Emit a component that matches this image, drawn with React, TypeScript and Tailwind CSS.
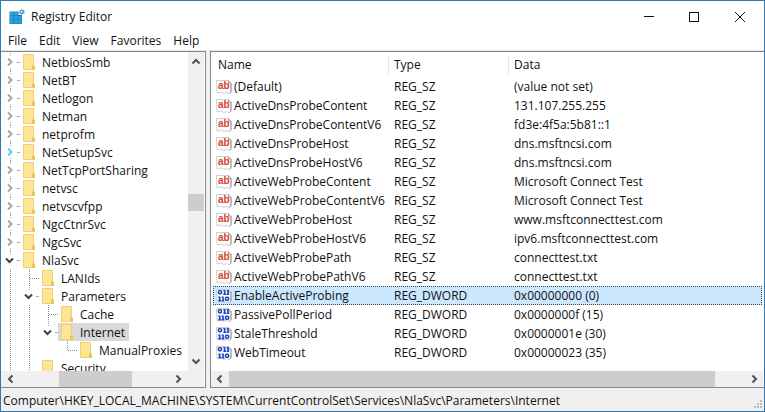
import type { ReactNode } from "react";

type Guide = "none" | "line" | "tee" | "elbow";

interface TreeItem {
  name: string;
  guides: Guide[];
  state?: "closed" | "open";
  active?: boolean;
  selected?: boolean;
}

const services = [
  "NetbiosSmb",
  "NetBT",
  "Netlogon",
  "Netman",
  "netprofm",
  "NetSetupSvc",
  "NetTcpPortSharing",
  "netvsc",
  "netvscvfpp",
  "NgcCtnrSvc",
  "NgcSvc",
];

const tree: TreeItem[] = [
  ...services.map((name): TreeItem => ({
    name,
    guides: [],
    state: "closed",
    active: name === "NetSetupSvc",
  })),
  { name: "NlaSvc", guides: [], state: "open" },
  { name: "LANIds", guides: ["line", "tee"] },
  { name: "Parameters", guides: ["line"], state: "open" },
  { name: "Cache", guides: ["line", "line", "tee"] },
  { name: "Internet", guides: ["line", "line"], state: "open", selected: true },
  { name: "ManualProxies", guides: ["line", "line", "none", "elbow"] },
  { name: "Security", guides: ["line", "line"] },
];

interface RegistryValue {
  name: string;
  type: "REG_SZ" | "REG_DWORD";
  data: string;
  selected?: boolean;
}

const values: RegistryValue[] = [
  { name: "(Default)", type: "REG_SZ", data: "(value not set)" },
  { name: "ActiveDnsProbeContent", type: "REG_SZ", data: "131.107.255.255" },
  { name: "ActiveDnsProbeContentV6", type: "REG_SZ", data: "fd3e:4f5a:5b81::1" },
  { name: "ActiveDnsProbeHost", type: "REG_SZ", data: "dns.msftncsi.com" },
  { name: "ActiveDnsProbeHostV6", type: "REG_SZ", data: "dns.msftncsi.com" },
  { name: "ActiveWebProbeContent", type: "REG_SZ", data: "Microsoft Connect Test" },
  { name: "ActiveWebProbeContentV6", type: "REG_SZ", data: "Microsoft Connect Test" },
  { name: "ActiveWebProbeHost", type: "REG_SZ", data: "www.msftconnecttest.com" },
  { name: "ActiveWebProbeHostV6", type: "REG_SZ", data: "ipv6.msftconnecttest.com" },
  { name: "ActiveWebProbePath", type: "REG_SZ", data: "connecttest.txt" },
  { name: "ActiveWebProbePathV6", type: "REG_SZ", data: "connecttest.txt" },
  { name: "EnableActiveProbing", type: "REG_DWORD", data: "0x00000000 (0)", selected: true },
  { name: "PassivePollPeriod", type: "REG_DWORD", data: "0x0000000f (15)" },
  { name: "StaleThreshold", type: "REG_DWORD", data: "0x0000001e (30)" },
  { name: "WebTimeout", type: "REG_DWORD", data: "0x00000023 (35)" },
];

function AppIcon() {
  return (
    <svg width="16" height="16" viewBox="0 0 16 16" aria-hidden="true">
      <path d="M0.500 2.500h9v3.500h3.500v9H0.500z" fill="#1279b8" />
      <path
        d="M1 3h3.500v3.500H1zM5.200 3h3.500v3.500H5.200zM1 7h3.500v3.500H1zM5.200 7h3.500v3.500H5.200zM9.300 7h3.200v3.500H9.300zM1 11h3.500v3.500H1zM5.200 11h3.500v3.500H5.200zM9.300 11h3.200v3.500H9.300z"
        fill="#2ba4de"
      />
      <path d="M12.800 0.300l2.600 1.400v2.500l-2.600 1.300-2.400-1.300V1.700z" fill="#3d9fd0" />
      <path d="M12.800 1.800l1.200 1-1.200 1.200-1.200-1.200z" fill="#e8f6fd" />
    </svg>
  );
}

function Folder() {
  return (
    <svg className="ml-0.5 shrink-0" width="14" height="16" viewBox="0 0 14 16" aria-hidden="true">
      <path d="M1 0H12V11l1 1V16H1z" fill="#fce594" />
      <path d="M1.500 0.500H11.500V11.500l1 1V15.500H1.500z" fill="none" stroke="#f0d070" />
      <path d="M10 16V12l1.500-2V11.500l1.500 1V16z" fill="#ebc556" />
    </svg>
  );
}

function Chevron({ dir, color = "#505050" }: { dir: "up" | "down" | "left" | "right"; color?: string }) {
  const paths = {
    up: "M1.500 6.500L5 3l3.500 3.500",
    down: "M1.500 3.500L5 7l3.500-3.500",
    left: "M6.500 1.500L3 5l3.500 3.500",
    right: "M3.500 1.500L7 5L3.500 8.500",
  };
  return (
    <svg width="10" height="10" viewBox="0 0 10 10" fill="none" aria-hidden="true">
      <path d={paths[dir]} stroke={color} strokeWidth="2" />
    </svg>
  );
}

function GuideCell({ kind }: { kind: Guide }) {
  return (
    <svg className="shrink-0" width="19" height="18" viewBox="0 0 19 18" fill="none" stroke="#8c8c8c" aria-hidden="true">
      {(kind === "line" || kind === "tee") && <path d="M9.500 0V18" strokeDasharray="1 1" />}
      {kind === "elbow" && <path d="M9.500 0V10" strokeDasharray="1 1" />}
      {(kind === "tee" || kind === "elbow") && <path d="M10 9.500H19" strokeDasharray="1 1" />}
    </svg>
  );
}

function ToggleCell({ item }: { item: TreeItem }) {
  const open = item.state === "open";
  const color = open ? "#404040" : item.active ? "#4fd0ee" : "#a6a6a6";
  return (
    <button type="button" aria-label={`Toggle ${item.name}`} aria-expanded={open} className="shrink-0">
      <svg width="19" height="18" viewBox="0 0 19 18" fill="none" aria-hidden="true">
        <path d="M9.500 0V3" stroke="#a8a8a8" strokeDasharray="1 1" />
        {!open && <path d="M9.500 15V18" stroke="#a8a8a8" strokeDasharray="1 1" />}
        <path d="M16 9.500H19" stroke="#a8a8a8" />
        <path d={open ? "M5 7.500L8.500 11L12 7.500" : "M7 5.500L10.500 9L7 12.500"} stroke={color} strokeWidth="2" />
      </svg>
    </button>
  );
}

function TreeRow({ item }: { item: TreeItem }) {
  return (
    <li className="flex h-[18px] items-center whitespace-nowrap">
      {item.guides.map((kind, i) => (
        <GuideCell key={i} kind={kind} />
      ))}
      {item.state && <ToggleCell item={item} />}
      <span className={`flex h-[18px] items-center pr-1 ${item.selected ? "bg-[#d9d9d9]" : ""}`}>
        <span className="flex w-[22px] shrink-0">
          <Folder />
        </span>
        <span className="pt-0.5">{item.name}</span>
      </span>
    </li>
  );
}

function ValueIcon({ type }: { type: RegistryValue["type"] }) {
  return (
    <svg className="shrink-0" width="16" height="16" viewBox="0 0 16 16" aria-hidden="true">
      <path d="M0.500 1.500H12.500l2.500 2.500V13l-1.500 1.500-3-1-2.500 1-3-1.500-4 1z" fill="#fdfdfd" stroke="#cfcfcf" />
      <path d="M12.500 1.500v2.500H15V13l-1.500 1.500" fill="none" stroke="#949494" />
      {type === "REG_SZ" ? (
        <text x="2" y="10" className="fill-[#d9432b] font-['Liberation_Sans',sans-serif] text-[10px] font-bold">
          ab
        </text>
      ) : (
        <g fill="none" stroke="#2346c4" strokeWidth="1.600">
          <rect x="2.500" y="2.800" width="3" height="3" rx="1" />
          <path d="M8.700 2v4.600M12 2v4.600M7.300 2.800h1.400M10.700 2.800H12M7.300 6.200h2.800M10.700 6.200h2.500" />
          <path d="M3.700 8.400V13M7 8.400V13M2.300 9.200h1.400M5.700 9.200H7M2.300 12.600h2.800M5.700 12.600h2.600" />
          <rect x="9.600" y="9.200" width="3" height="3" rx="1" />
        </g>
      )}
    </svg>
  );
}

function ArrowButton({ label, children, className }: { label: string; children: ReactNode; className: string }) {
  return (
    <button type="button" aria-label={label} className={`flex shrink-0 items-center justify-center ${className}`}>
      {children}
    </button>
  );
}

export default function App() {
  return (
    <div className="flex h-screen flex-col border border-[#2a78b8] bg-white font-['Open_Sans',sans-serif] text-[12px] leading-[18px] text-[#111111]">
      <header className="flex h-[31px] shrink-0 items-center">
        <h1 className="flex flex-1 items-center gap-1.5 pl-2">
          <AppIcon />
          Registry Editor
        </h1>
        <button type="button" aria-label="Minimize" className="flex h-full w-[45px] items-center justify-center">
          <svg width="10" height="10" viewBox="0 0 10 10" stroke="#111111" aria-hidden="true">
            <path d="M0 4.500h10" />
          </svg>
        </button>
        <button type="button" aria-label="Maximize" className="flex h-full w-[45px] items-center justify-center">
          <svg width="10" height="10" viewBox="0 0 10 10" fill="none" stroke="#111111" aria-hidden="true">
            <rect x="0.500" y="0.500" width="9" height="9" />
          </svg>
        </button>
        <button type="button" aria-label="Close" className="flex h-full w-[48px] items-center justify-center">
          <svg width="10" height="10" viewBox="0 0 10 10" stroke="#111111" aria-hidden="true">
            <path d="M0 0l10 10M10 0L0 10" />
          </svg>
        </button>
      </header>

      <nav className="flex h-[18px] shrink-0 items-center gap-3 pl-[7px]" aria-label="Menu bar">
        {["File", "Edit", "View", "Favorites", "Help"].map((label) => (
          <button key={label} type="button">
            {label}
          </button>
        ))}
      </nav>

      <main className="flex min-h-0 flex-1 gap-1 border-t border-[#e6e6e6] bg-[#f0f0f0]">
        <section aria-label="Keys" className="flex w-[205px] shrink-0 flex-col border-y border-r border-[#828790] bg-white">
          <div className="flex min-h-0 flex-1">
            <ul className="min-w-0 flex-1 overflow-hidden pt-px">
              {tree.map((item) => (
                <TreeRow key={item.name} item={item} />
              ))}
            </ul>
            <div className="mr-px flex w-4 shrink-0 flex-col bg-[#f0f0f0]">
              <ArrowButton label="Scroll keys up" className="h-5">
                <Chevron dir="up" />
              </ArrowButton>
              <div className="flex-[122]" />
              <div className="h-[17px] bg-[#cdcdcd]" />
              <div className="flex-[141]" />
              <ArrowButton label="Scroll keys down" className="h-5">
                <Chevron dir="down" />
              </ArrowButton>
            </div>
          </div>
          <div className="mr-px flex h-4 shrink-0 bg-[#f0f0f0]">
            <ArrowButton label="Scroll keys left" className="w-5">
              <Chevron dir="left" />
            </ArrowButton>
            <div className="flex-[38]" />
            <div className="w-[73px] bg-[#cdcdcd]" />
            <div className="flex-[37]" />
            <ArrowButton label="Scroll keys right" className="mr-4 w-5">
              <Chevron dir="right" />
            </ArrowButton>
          </div>
        </section>

        <section aria-label="Values" className="flex min-w-0 flex-1 flex-col border-y border-l border-[#828790] bg-white">
          <div className="min-h-0 flex-1 overflow-hidden px-0.5">
            <table className="w-full table-fixed border-collapse whitespace-nowrap text-left">
              <thead>
                <tr className="h-[25px]">
                  {["Name", "Type", "Data"].map((label, i) => (
                    <th
                      key={label}
                      scope="col"
                      className={`p-0 font-normal ${i === 0 ? "w-[175px] pl-[5px]" : i === 1 ? "w-[120px]" : ""}`}
                    >
                      <span className={`block ${i === 0 ? "" : "border-l border-[#e8e8e8] pl-[5px]"}`}>{label}</span>
                    </th>
                  ))}
                </tr>
              </thead>
              <tbody>
                {values.map((value) => (
                  <tr
                    key={value.name}
                    className={`h-[19px] ${value.selected ? "bg-[#cce8ff] outline-1 -outline-offset-1 outline-dotted outline-[#33475b]" : ""}`}
                  >
                    <td className="p-0 pl-[3px]">
                      <span className="flex items-center gap-0.5">
                        <ValueIcon type={value.type} />
                        {value.name}
                      </span>
                    </td>
                    <td className="p-0 pl-1.5">{value.type}</td>
                    <td className="p-0 pl-1.5">{value.data}</td>
                  </tr>
                ))}
              </tbody>
            </table>
          </div>
          <div className="mr-px flex h-4 shrink-0 bg-[#f0f0f0]">
            <ArrowButton label="Scroll values left" className="w-[18px]">
              <Chevron dir="left" />
            </ArrowButton>
            <div className="flex-[486] bg-[#cdcdcd]" />
            <div className="flex-[30]" />
            <ArrowButton label="Scroll values right" className="w-[18px]">
              <Chevron dir="right" />
            </ArrowButton>
          </div>
        </section>
      </main>

      <footer className="flex h-[23px] shrink-0 items-center justify-between bg-[#f0f0f0] pl-0.5 pt-0.5">
        Computer\HKEY_LOCAL_MACHINE\SYSTEM\CurrentControlSet\Services\NlaSvc\Parameters\Internet
        <svg className="mr-px self-end" width="10" height="11" viewBox="0 0 10 11" fill="#bdbdbd" aria-hidden="true">
          <path d="M7 0h2v2H7zM4 3h2v2H4zM7 3h2v2H7zM1 6h2v2H1zM4 6h2v2H4zM7 6h2v2H7z" />
        </svg>
      </footer>
    </div>
  );
}
